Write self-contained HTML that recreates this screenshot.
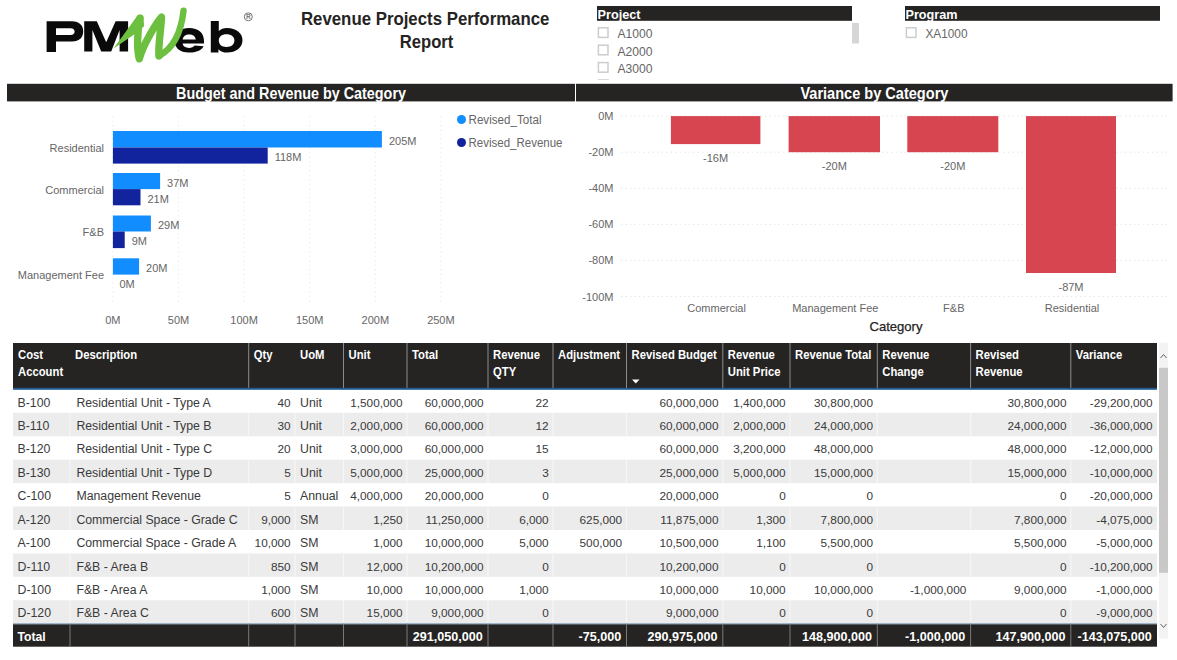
<!DOCTYPE html><html><head><meta charset="utf-8"><style>
html,body{margin:0;padding:0;background:#fff;}
body{width:1177px;height:660px;overflow:hidden;position:relative;font-family:"Liberation Sans", sans-serif;}
svg{position:absolute;left:0;top:0;}
</style></head><body>
<svg width="1177" height="660" viewBox="0 0 1177 660" font-family='"Liberation Sans", sans-serif'>

<g id="logo">
<path fill="#0a0a0a" fill-rule="evenodd" d="M46.6,21.2 H72 C79.5,21.2 83.2,25.5 83.2,31.3 C83.2,37.3 79.5,41.6 72,41.6 H56 V52 H46.6 Z M56,28.3 H70.5 C73.2,28.3 74.6,29.6 74.6,31.6 C74.6,33.6 73.2,35.1 70.5,35.1 H56 Z"/>
<path fill="#0a0a0a" d="M84.2,21.3 H96.8 L106.2,42.3 L115.6,21.3 H128.1 V51.6 H119.6 V30 L111.2,51.6 H101.2 L92.4,30 V51.6 H84.2 Z"/>
<path fill="#0a0a0a" fill-rule="evenodd" d="M204,43.6 H182.6 C183,46.5 185.5,48 189,48 C191.5,48 193.5,47.2 194.6,45.6 L203.6,46.2 C201.6,50.2 196.5,52.5 189,52.5 C179.5,52.5 174.4,47.5 174.4,40.2 C174.4,32.8 180,27.9 189,27.9 C198.5,27.9 204,32.8 204,41 Z M182.6,39.6 H195.8 C195.4,36.3 192.8,34.4 189.2,34.4 C185.6,34.4 183.1,36.3 182.6,39.6 Z"/>
<path fill="#0a0a0a" fill-rule="evenodd" d="M210.8,21.1 H218.8 V31 C220.8,29 223.5,28 227,28 C236,28 242.5,33 242.5,40.3 C242.5,47.6 236,52.6 227,52.6 C223.3,52.6 220.5,51.4 218.4,49.2 V52.4 H210.8 Z M226.5,34.3 C221.5,34.3 218.8,36.8 218.8,40.6 C218.8,44.4 221.5,47 226.5,47 C231.5,47 234.4,44.4 234.4,40.6 C234.4,36.8 231.5,34.3 226.5,34.3 Z"/>
<path fill="#6cbf3f" d="M113.6,48.4 L136.4,17 C138.2,14.4 141.5,14 143.2,16.4 L144.2,26 L137,32.5 L113.6,48.4 Z"/>
<path fill="none" stroke="#6cbf3f" stroke-width="7.4" stroke-linejoin="round" stroke-linecap="round" d="M140,18.2 C137.5,30 136.5,48 139.3,58.8 C143,45 155,25 161.5,17.2 C161,30 158,45 159,55.8"/>
<path fill="none" stroke="#6cbf3f" stroke-width="6.4" stroke-linecap="round" d="M159,55.8 C170,50 180.5,38 183.5,10.8"/>
<circle cx="248.3" cy="16.8" r="4" fill="none" stroke="#777" stroke-width="1"/>
<text x="248.4" y="19.4" font-size="6.5" font-weight="bold" text-anchor="middle" fill="#777">R</text>
</g>
<text x="425.2" y="24.8" font-size="17.8" font-weight="bold" fill="#252423" text-anchor="middle" textLength="248.5" lengthAdjust="spacingAndGlyphs">Revenue Projects Performance</text>
<text x="426.6" y="47.6" font-size="17.8" font-weight="bold" fill="#252423" text-anchor="middle" textLength="53.5" lengthAdjust="spacingAndGlyphs">Report</text>
<defs><clipPath id="pclip"><rect x="590" y="0" width="280" height="80"/></clipPath></defs>
<g clip-path="url(#pclip)">
<rect x="597" y="6" width="255" height="14.8" fill="#252423"/>
<text x="597.5" y="19" font-size="12.5" font-weight="bold" fill="#fff" textLength="43" lengthAdjust="spacingAndGlyphs">Project</text>
<rect x="598.4" y="27.8" width="9.6" height="9.6" fill="#fff" stroke="#cdcdcd" stroke-width="1.5"/>
<text x="617.5" y="38.2" font-size="12.3" fill="#666" textLength="35" lengthAdjust="spacingAndGlyphs">A1000</text>
<rect x="598.4" y="45.199999999999996" width="9.6" height="9.6" fill="#fff" stroke="#cdcdcd" stroke-width="1.5"/>
<text x="617.5" y="55.599999999999994" font-size="12.3" fill="#666" textLength="35" lengthAdjust="spacingAndGlyphs">A2000</text>
<rect x="598.4" y="62.6" width="9.6" height="9.6" fill="#fff" stroke="#cdcdcd" stroke-width="1.5"/>
<text x="617.5" y="73.0" font-size="12.3" fill="#666" textLength="35" lengthAdjust="spacingAndGlyphs">A3000</text>
<rect x="598.4" y="79.99999999999999" width="9.6" height="9.6" fill="#fff" stroke="#cdcdcd" stroke-width="1.5"/>
<text x="617.5" y="90.39999999999999" font-size="12.3" fill="#666" textLength="35" lengthAdjust="spacingAndGlyphs">A4000</text>
</g>
<rect x="852" y="23" width="7" height="20.5" fill="#d6d6d6"/>
<rect x="905" y="6" width="255" height="14.8" fill="#252423"/>
<text x="905.5" y="19" font-size="12.5" font-weight="bold" fill="#fff" textLength="52" lengthAdjust="spacingAndGlyphs">Program</text>
<rect x="906.4" y="27.8" width="9.6" height="9.6" fill="#fff" stroke="#cdcdcd" stroke-width="1.5"/>
<text x="925.5" y="38.2" font-size="12.3" fill="#666" textLength="42" lengthAdjust="spacingAndGlyphs">XA1000</text>
<rect x="7" y="83.8" width="568" height="17.6" fill="#252423"/>
<text x="291" y="99" font-size="16.5" font-weight="bold" fill="#fff" text-anchor="middle" textLength="230" lengthAdjust="spacingAndGlyphs">Budget and Revenue by Category</text>
<rect x="576" y="83.8" width="596.6" height="17.6" fill="#252423"/>
<text x="874.4" y="99" font-size="16.5" font-weight="bold" fill="#fff" text-anchor="middle" textLength="148" lengthAdjust="spacingAndGlyphs">Variance by Category</text>
<line x1="112.9" y1="116" x2="112.9" y2="302" stroke="#ececec" stroke-width="1" stroke-dasharray="1.5,3"/>
<text x="112.9" y="324" font-size="11" fill="#666" text-anchor="middle">0M</text>
<line x1="178.5" y1="116" x2="178.5" y2="302" stroke="#ececec" stroke-width="1" stroke-dasharray="1.5,3"/>
<text x="178.5" y="324" font-size="11" fill="#666" text-anchor="middle">50M</text>
<line x1="244.1" y1="116" x2="244.1" y2="302" stroke="#ececec" stroke-width="1" stroke-dasharray="1.5,3"/>
<text x="244.1" y="324" font-size="11" fill="#666" text-anchor="middle">100M</text>
<line x1="309.7" y1="116" x2="309.7" y2="302" stroke="#ececec" stroke-width="1" stroke-dasharray="1.5,3"/>
<text x="309.7" y="324" font-size="11" fill="#666" text-anchor="middle">150M</text>
<line x1="375.3" y1="116" x2="375.3" y2="302" stroke="#ececec" stroke-width="1" stroke-dasharray="1.5,3"/>
<text x="375.3" y="324" font-size="11" fill="#666" text-anchor="middle">200M</text>
<line x1="440.9" y1="116" x2="440.9" y2="302" stroke="#ececec" stroke-width="1" stroke-dasharray="1.5,3"/>
<text x="440.9" y="324" font-size="11" fill="#666" text-anchor="middle">250M</text>
<rect x="112.9" y="131" width="269.0" height="16.5" fill="#118dff"/>
<rect x="112.9" y="147.5" width="154.8" height="16.1" fill="#12239e"/>
<text x="104" y="152.1" font-size="11" fill="#666" text-anchor="end">Residential</text>
<text x="388.9" y="144.8" font-size="11" fill="#666">205M</text>
<text x="274.7" y="161.1" font-size="11" fill="#666">118M</text>
<rect x="112.9" y="173" width="47.2" height="16.1" fill="#118dff"/>
<rect x="112.9" y="189.1" width="27.6" height="16.2" fill="#12239e"/>
<text x="104" y="193.7" font-size="11" fill="#666" text-anchor="end">Commercial</text>
<text x="167.1" y="186.6" font-size="11" fill="#666">37M</text>
<text x="147.5" y="202.7" font-size="11" fill="#666">21M</text>
<rect x="112.9" y="215.5" width="38.0" height="16.0" fill="#118dff"/>
<rect x="112.9" y="231.5" width="11.8" height="16.6" fill="#12239e"/>
<text x="104" y="236.1" font-size="11" fill="#666" text-anchor="end">F&amp;B</text>
<text x="157.9" y="229.0" font-size="11" fill="#666">29M</text>
<text x="131.7" y="245.3" font-size="11" fill="#666">9M</text>
<rect x="112.9" y="258.3" width="26.2" height="16.3" fill="#118dff"/>
<text x="104" y="279.2" font-size="11" fill="#666" text-anchor="end">Management Fee</text>
<text x="146.1" y="272.0" font-size="11" fill="#666">20M</text>
<text x="119.5" y="288.2" font-size="11" fill="#666">0M</text>
<circle cx="461.5" cy="119.5" r="4.5" fill="#118dff"/>
<text x="468.5" y="123.8" font-size="12" fill="#666" textLength="73" lengthAdjust="spacingAndGlyphs">Revised_Total</text>
<circle cx="461.5" cy="142.5" r="4.5" fill="#12239e"/>
<text x="468.5" y="146.8" font-size="12" fill="#666" textLength="94" lengthAdjust="spacingAndGlyphs">Revised_Revenue</text>
<line x1="621" y1="116.1" x2="1169" y2="116.1" stroke="#e6e6e6" stroke-width="1" stroke-dasharray="1.5,3"/>
<text x="613.5" y="120.1" font-size="11" fill="#666" text-anchor="end">0M</text>
<line x1="621" y1="152.2" x2="1169" y2="152.2" stroke="#e6e6e6" stroke-width="1" stroke-dasharray="1.5,3"/>
<text x="613.5" y="156.2" font-size="11" fill="#666" text-anchor="end">-20M</text>
<line x1="621" y1="188.3" x2="1169" y2="188.3" stroke="#e6e6e6" stroke-width="1" stroke-dasharray="1.5,3"/>
<text x="613.5" y="192.3" font-size="11" fill="#666" text-anchor="end">-40M</text>
<line x1="621" y1="224.3" x2="1169" y2="224.3" stroke="#e6e6e6" stroke-width="1" stroke-dasharray="1.5,3"/>
<text x="613.5" y="228.3" font-size="11" fill="#666" text-anchor="end">-60M</text>
<line x1="621" y1="260.4" x2="1169" y2="260.4" stroke="#e6e6e6" stroke-width="1" stroke-dasharray="1.5,3"/>
<text x="613.5" y="264.4" font-size="11" fill="#666" text-anchor="end">-80M</text>
<line x1="621" y1="296.5" x2="1169" y2="296.5" stroke="#e6e6e6" stroke-width="1" stroke-dasharray="1.5,3"/>
<text x="613.5" y="300.5" font-size="11" fill="#666" text-anchor="end">-100M</text>
<rect x="670.9" y="116.1" width="89.5" height="28.0" fill="#d64550"/>
<text x="715.6" y="162.1" font-size="11" fill="#666" text-anchor="middle">-16M</text>
<text x="716.6" y="312" font-size="11" fill="#666" text-anchor="middle">Commercial</text>
<rect x="788.6" y="116.1" width="91.4" height="36.1" fill="#d64550"/>
<text x="834.3" y="170.2" font-size="11" fill="#666" text-anchor="middle">-20M</text>
<text x="835.3" y="312" font-size="11" fill="#666" text-anchor="middle">Management Fee</text>
<rect x="907.3" y="116.1" width="91.0" height="36.1" fill="#d64550"/>
<text x="952.8" y="170.2" font-size="11" fill="#666" text-anchor="middle">-20M</text>
<text x="953.8" y="312" font-size="11" fill="#666" text-anchor="middle">F&amp;B</text>
<rect x="1026" y="116.1" width="90.0" height="156.9" fill="#d64550"/>
<text x="1071.0" y="291.0" font-size="11" fill="#666" text-anchor="middle">-87M</text>
<text x="1072.0" y="312" font-size="11" fill="#666" text-anchor="middle">Residential</text>
<text x="896" y="330.5" font-size="13" fill="#252423" text-anchor="middle" textLength="53" lengthAdjust="spacingAndGlyphs" stroke="#252423" stroke-width="0.25">Category</text>
<rect x="13" y="343" width="1144" height="45.60000000000002" fill="#252423"/>
<rect x="248.2" y="343" width="1" height="45.60000000000002" fill="#8c8c8c"/>
<rect x="343.0" y="343" width="1" height="45.60000000000002" fill="#8c8c8c"/>
<rect x="406.5" y="343" width="1" height="45.60000000000002" fill="#8c8c8c"/>
<rect x="487.5" y="343" width="1" height="45.60000000000002" fill="#8c8c8c"/>
<rect x="552.5" y="343" width="1" height="45.60000000000002" fill="#8c8c8c"/>
<rect x="626.0" y="343" width="1" height="45.60000000000002" fill="#8c8c8c"/>
<rect x="722.3" y="343" width="1" height="45.60000000000002" fill="#8c8c8c"/>
<rect x="789.5" y="343" width="1" height="45.60000000000002" fill="#8c8c8c"/>
<rect x="876.8" y="343" width="1" height="45.60000000000002" fill="#8c8c8c"/>
<rect x="970.1" y="343" width="1" height="45.60000000000002" fill="#8c8c8c"/>
<rect x="1070.3" y="343" width="1" height="45.60000000000002" fill="#8c8c8c"/>
<rect x="13" y="387.8" width="1144" height="2" fill="#245b8f"/>
<text transform="matrix(0.876,0,0,1,18.0,358.6)" font-size="12.9" font-weight="bold" fill="#fff">Cost</text>
<text transform="matrix(0.876,0,0,1,18.0,375.6)" font-size="12.9" font-weight="bold" fill="#fff">Account</text>
<text transform="matrix(0.876,0,0,1,75.0,358.6)" font-size="12.9" font-weight="bold" fill="#fff">Description</text>
<text transform="matrix(0.876,0,0,1,253.7,358.6)" font-size="12.9" font-weight="bold" fill="#fff">Qty</text>
<text transform="matrix(0.876,0,0,1,300.0,358.6)" font-size="12.9" font-weight="bold" fill="#fff">UoM</text>
<text transform="matrix(0.876,0,0,1,348.5,358.6)" font-size="12.9" font-weight="bold" fill="#fff">Unit</text>
<text transform="matrix(0.876,0,0,1,412.0,358.6)" font-size="12.9" font-weight="bold" fill="#fff">Total</text>
<text transform="matrix(0.876,0,0,1,493.0,358.6)" font-size="12.9" font-weight="bold" fill="#fff">Revenue</text>
<text transform="matrix(0.876,0,0,1,493.0,375.6)" font-size="12.9" font-weight="bold" fill="#fff">QTY</text>
<text transform="matrix(0.876,0,0,1,558.0,358.6)" font-size="12.9" font-weight="bold" fill="#fff">Adjustment</text>
<text transform="matrix(0.876,0,0,1,631.5,358.6)" font-size="12.9" font-weight="bold" fill="#fff">Revised Budget</text>
<text transform="matrix(0.876,0,0,1,727.8,358.6)" font-size="12.9" font-weight="bold" fill="#fff">Revenue</text>
<text transform="matrix(0.876,0,0,1,727.8,375.6)" font-size="12.9" font-weight="bold" fill="#fff">Unit Price</text>
<text transform="matrix(0.876,0,0,1,795.0,358.6)" font-size="12.9" font-weight="bold" fill="#fff">Revenue Total</text>
<text transform="matrix(0.876,0,0,1,882.3,358.6)" font-size="12.9" font-weight="bold" fill="#fff">Revenue</text>
<text transform="matrix(0.876,0,0,1,882.3,375.6)" font-size="12.9" font-weight="bold" fill="#fff">Change</text>
<text transform="matrix(0.876,0,0,1,975.6,358.6)" font-size="12.9" font-weight="bold" fill="#fff">Revised</text>
<text transform="matrix(0.876,0,0,1,975.6,375.6)" font-size="12.9" font-weight="bold" fill="#fff">Revenue</text>
<text transform="matrix(0.876,0,0,1,1075.8,358.6)" font-size="12.9" font-weight="bold" fill="#fff">Variance</text>
<path d="M632,379.6 L639.5,379.6 L635.75,383.6 Z" fill="#fff"/>
<text x="17.5" y="406.5" font-size="12.3" fill="#3a3a3a">B-100</text>
<text x="76.4" y="406.5" font-size="12.3" fill="#3a3a3a">Residential Unit - Type A</text>
<text x="290.7" y="406.5" font-size="11.8" fill="#3a3a3a" text-anchor="end">40</text>
<text x="300.0" y="406.5" font-size="12.3" fill="#3a3a3a">Unit</text>
<text x="402.7" y="406.5" font-size="11.8" fill="#3a3a3a" text-anchor="end">1,500,000</text>
<text x="483.7" y="406.5" font-size="11.8" fill="#3a3a3a" text-anchor="end">60,000,000</text>
<text x="548.7" y="406.5" font-size="11.8" fill="#3a3a3a" text-anchor="end">22</text>
<text x="718.5" y="406.5" font-size="11.8" fill="#3a3a3a" text-anchor="end">60,000,000</text>
<text x="785.7" y="406.5" font-size="11.8" fill="#3a3a3a" text-anchor="end">1,400,000</text>
<text x="873.0" y="406.5" font-size="11.8" fill="#3a3a3a" text-anchor="end">30,800,000</text>
<text x="1066.5" y="406.5" font-size="11.8" fill="#3a3a3a" text-anchor="end">30,800,000</text>
<text x="1152.7" y="406.5" font-size="11.8" fill="#3a3a3a" text-anchor="end">-29,200,000</text>
<rect x="13" y="412.83" width="1144" height="23.43" fill="#ececec"/>
<rect x="69.5" y="412.83" width="1" height="23.43" fill="#f7f7f7"/>
<rect x="248.2" y="412.83" width="1" height="23.43" fill="#f7f7f7"/>
<rect x="294.5" y="412.83" width="1" height="23.43" fill="#f7f7f7"/>
<rect x="343.0" y="412.83" width="1" height="23.43" fill="#f7f7f7"/>
<rect x="406.5" y="412.83" width="1" height="23.43" fill="#f7f7f7"/>
<rect x="487.5" y="412.83" width="1" height="23.43" fill="#f7f7f7"/>
<rect x="552.5" y="412.83" width="1" height="23.43" fill="#f7f7f7"/>
<rect x="626.0" y="412.83" width="1" height="23.43" fill="#f7f7f7"/>
<rect x="722.3" y="412.83" width="1" height="23.43" fill="#f7f7f7"/>
<rect x="789.5" y="412.83" width="1" height="23.43" fill="#f7f7f7"/>
<rect x="876.8" y="412.83" width="1" height="23.43" fill="#f7f7f7"/>
<rect x="970.1" y="412.83" width="1" height="23.43" fill="#f7f7f7"/>
<rect x="1070.3" y="412.83" width="1" height="23.43" fill="#f7f7f7"/>
<text x="17.5" y="429.9" font-size="12.3" fill="#3a3a3a">B-110</text>
<text x="76.4" y="429.9" font-size="12.3" fill="#3a3a3a">Residential Unit - Type B</text>
<text x="290.7" y="429.9" font-size="11.8" fill="#3a3a3a" text-anchor="end">30</text>
<text x="300.0" y="429.9" font-size="12.3" fill="#3a3a3a">Unit</text>
<text x="402.7" y="429.9" font-size="11.8" fill="#3a3a3a" text-anchor="end">2,000,000</text>
<text x="483.7" y="429.9" font-size="11.8" fill="#3a3a3a" text-anchor="end">60,000,000</text>
<text x="548.7" y="429.9" font-size="11.8" fill="#3a3a3a" text-anchor="end">12</text>
<text x="718.5" y="429.9" font-size="11.8" fill="#3a3a3a" text-anchor="end">60,000,000</text>
<text x="785.7" y="429.9" font-size="11.8" fill="#3a3a3a" text-anchor="end">2,000,000</text>
<text x="873.0" y="429.9" font-size="11.8" fill="#3a3a3a" text-anchor="end">24,000,000</text>
<text x="1066.5" y="429.9" font-size="11.8" fill="#3a3a3a" text-anchor="end">24,000,000</text>
<text x="1152.7" y="429.9" font-size="11.8" fill="#3a3a3a" text-anchor="end">-36,000,000</text>
<text x="17.5" y="453.4" font-size="12.3" fill="#3a3a3a">B-120</text>
<text x="76.4" y="453.4" font-size="12.3" fill="#3a3a3a">Residential Unit - Type C</text>
<text x="290.7" y="453.4" font-size="11.8" fill="#3a3a3a" text-anchor="end">20</text>
<text x="300.0" y="453.4" font-size="12.3" fill="#3a3a3a">Unit</text>
<text x="402.7" y="453.4" font-size="11.8" fill="#3a3a3a" text-anchor="end">3,000,000</text>
<text x="483.7" y="453.4" font-size="11.8" fill="#3a3a3a" text-anchor="end">60,000,000</text>
<text x="548.7" y="453.4" font-size="11.8" fill="#3a3a3a" text-anchor="end">15</text>
<text x="718.5" y="453.4" font-size="11.8" fill="#3a3a3a" text-anchor="end">60,000,000</text>
<text x="785.7" y="453.4" font-size="11.8" fill="#3a3a3a" text-anchor="end">3,200,000</text>
<text x="873.0" y="453.4" font-size="11.8" fill="#3a3a3a" text-anchor="end">48,000,000</text>
<text x="1066.5" y="453.4" font-size="11.8" fill="#3a3a3a" text-anchor="end">48,000,000</text>
<text x="1152.7" y="453.4" font-size="11.8" fill="#3a3a3a" text-anchor="end">-12,000,000</text>
<rect x="13" y="459.69" width="1144" height="23.43" fill="#ececec"/>
<rect x="69.5" y="459.69" width="1" height="23.43" fill="#f7f7f7"/>
<rect x="248.2" y="459.69" width="1" height="23.43" fill="#f7f7f7"/>
<rect x="294.5" y="459.69" width="1" height="23.43" fill="#f7f7f7"/>
<rect x="343.0" y="459.69" width="1" height="23.43" fill="#f7f7f7"/>
<rect x="406.5" y="459.69" width="1" height="23.43" fill="#f7f7f7"/>
<rect x="487.5" y="459.69" width="1" height="23.43" fill="#f7f7f7"/>
<rect x="552.5" y="459.69" width="1" height="23.43" fill="#f7f7f7"/>
<rect x="626.0" y="459.69" width="1" height="23.43" fill="#f7f7f7"/>
<rect x="722.3" y="459.69" width="1" height="23.43" fill="#f7f7f7"/>
<rect x="789.5" y="459.69" width="1" height="23.43" fill="#f7f7f7"/>
<rect x="876.8" y="459.69" width="1" height="23.43" fill="#f7f7f7"/>
<rect x="970.1" y="459.69" width="1" height="23.43" fill="#f7f7f7"/>
<rect x="1070.3" y="459.69" width="1" height="23.43" fill="#f7f7f7"/>
<text x="17.5" y="476.8" font-size="12.3" fill="#3a3a3a">B-130</text>
<text x="76.4" y="476.8" font-size="12.3" fill="#3a3a3a">Residential Unit - Type D</text>
<text x="290.7" y="476.8" font-size="11.8" fill="#3a3a3a" text-anchor="end">5</text>
<text x="300.0" y="476.8" font-size="12.3" fill="#3a3a3a">Unit</text>
<text x="402.7" y="476.8" font-size="11.8" fill="#3a3a3a" text-anchor="end">5,000,000</text>
<text x="483.7" y="476.8" font-size="11.8" fill="#3a3a3a" text-anchor="end">25,000,000</text>
<text x="548.7" y="476.8" font-size="11.8" fill="#3a3a3a" text-anchor="end">3</text>
<text x="718.5" y="476.8" font-size="11.8" fill="#3a3a3a" text-anchor="end">25,000,000</text>
<text x="785.7" y="476.8" font-size="11.8" fill="#3a3a3a" text-anchor="end">5,000,000</text>
<text x="873.0" y="476.8" font-size="11.8" fill="#3a3a3a" text-anchor="end">15,000,000</text>
<text x="1066.5" y="476.8" font-size="11.8" fill="#3a3a3a" text-anchor="end">15,000,000</text>
<text x="1152.7" y="476.8" font-size="11.8" fill="#3a3a3a" text-anchor="end">-10,000,000</text>
<text x="17.5" y="500.2" font-size="12.3" fill="#3a3a3a">C-100</text>
<text x="76.4" y="500.2" font-size="12.3" fill="#3a3a3a">Management Revenue</text>
<text x="290.7" y="500.2" font-size="11.8" fill="#3a3a3a" text-anchor="end">5</text>
<text x="300.0" y="500.2" font-size="12.3" fill="#3a3a3a">Annual</text>
<text x="402.7" y="500.2" font-size="11.8" fill="#3a3a3a" text-anchor="end">4,000,000</text>
<text x="483.7" y="500.2" font-size="11.8" fill="#3a3a3a" text-anchor="end">20,000,000</text>
<text x="548.7" y="500.2" font-size="11.8" fill="#3a3a3a" text-anchor="end">0</text>
<text x="718.5" y="500.2" font-size="11.8" fill="#3a3a3a" text-anchor="end">20,000,000</text>
<text x="785.7" y="500.2" font-size="11.8" fill="#3a3a3a" text-anchor="end">0</text>
<text x="873.0" y="500.2" font-size="11.8" fill="#3a3a3a" text-anchor="end">0</text>
<text x="1066.5" y="500.2" font-size="11.8" fill="#3a3a3a" text-anchor="end">0</text>
<text x="1152.7" y="500.2" font-size="11.8" fill="#3a3a3a" text-anchor="end">-20,000,000</text>
<rect x="13" y="506.55" width="1144" height="23.43" fill="#ececec"/>
<rect x="69.5" y="506.55" width="1" height="23.43" fill="#f7f7f7"/>
<rect x="248.2" y="506.55" width="1" height="23.43" fill="#f7f7f7"/>
<rect x="294.5" y="506.55" width="1" height="23.43" fill="#f7f7f7"/>
<rect x="343.0" y="506.55" width="1" height="23.43" fill="#f7f7f7"/>
<rect x="406.5" y="506.55" width="1" height="23.43" fill="#f7f7f7"/>
<rect x="487.5" y="506.55" width="1" height="23.43" fill="#f7f7f7"/>
<rect x="552.5" y="506.55" width="1" height="23.43" fill="#f7f7f7"/>
<rect x="626.0" y="506.55" width="1" height="23.43" fill="#f7f7f7"/>
<rect x="722.3" y="506.55" width="1" height="23.43" fill="#f7f7f7"/>
<rect x="789.5" y="506.55" width="1" height="23.43" fill="#f7f7f7"/>
<rect x="876.8" y="506.55" width="1" height="23.43" fill="#f7f7f7"/>
<rect x="970.1" y="506.55" width="1" height="23.43" fill="#f7f7f7"/>
<rect x="1070.3" y="506.55" width="1" height="23.43" fill="#f7f7f7"/>
<text x="17.5" y="523.6" font-size="12.3" fill="#3a3a3a">A-120</text>
<text x="76.4" y="523.6" font-size="12.3" fill="#3a3a3a">Commercial Space - Grade C</text>
<text x="290.7" y="523.6" font-size="11.8" fill="#3a3a3a" text-anchor="end">9,000</text>
<text x="300.0" y="523.6" font-size="12.3" fill="#3a3a3a">SM</text>
<text x="402.7" y="523.6" font-size="11.8" fill="#3a3a3a" text-anchor="end">1,250</text>
<text x="483.7" y="523.6" font-size="11.8" fill="#3a3a3a" text-anchor="end">11,250,000</text>
<text x="548.7" y="523.6" font-size="11.8" fill="#3a3a3a" text-anchor="end">6,000</text>
<text x="622.2" y="523.6" font-size="11.8" fill="#3a3a3a" text-anchor="end">625,000</text>
<text x="718.5" y="523.6" font-size="11.8" fill="#3a3a3a" text-anchor="end">11,875,000</text>
<text x="785.7" y="523.6" font-size="11.8" fill="#3a3a3a" text-anchor="end">1,300</text>
<text x="873.0" y="523.6" font-size="11.8" fill="#3a3a3a" text-anchor="end">7,800,000</text>
<text x="1066.5" y="523.6" font-size="11.8" fill="#3a3a3a" text-anchor="end">7,800,000</text>
<text x="1152.7" y="523.6" font-size="11.8" fill="#3a3a3a" text-anchor="end">-4,075,000</text>
<text x="17.5" y="547.1" font-size="12.3" fill="#3a3a3a">A-100</text>
<text x="76.4" y="547.1" font-size="12.3" fill="#3a3a3a">Commercial Space - Grade A</text>
<text x="290.7" y="547.1" font-size="11.8" fill="#3a3a3a" text-anchor="end">10,000</text>
<text x="300.0" y="547.1" font-size="12.3" fill="#3a3a3a">SM</text>
<text x="402.7" y="547.1" font-size="11.8" fill="#3a3a3a" text-anchor="end">1,000</text>
<text x="483.7" y="547.1" font-size="11.8" fill="#3a3a3a" text-anchor="end">10,000,000</text>
<text x="548.7" y="547.1" font-size="11.8" fill="#3a3a3a" text-anchor="end">5,000</text>
<text x="622.2" y="547.1" font-size="11.8" fill="#3a3a3a" text-anchor="end">500,000</text>
<text x="718.5" y="547.1" font-size="11.8" fill="#3a3a3a" text-anchor="end">10,500,000</text>
<text x="785.7" y="547.1" font-size="11.8" fill="#3a3a3a" text-anchor="end">1,100</text>
<text x="873.0" y="547.1" font-size="11.8" fill="#3a3a3a" text-anchor="end">5,500,000</text>
<text x="1066.5" y="547.1" font-size="11.8" fill="#3a3a3a" text-anchor="end">5,500,000</text>
<text x="1152.7" y="547.1" font-size="11.8" fill="#3a3a3a" text-anchor="end">-5,000,000</text>
<rect x="13" y="553.41" width="1144" height="23.43" fill="#ececec"/>
<rect x="69.5" y="553.41" width="1" height="23.43" fill="#f7f7f7"/>
<rect x="248.2" y="553.41" width="1" height="23.43" fill="#f7f7f7"/>
<rect x="294.5" y="553.41" width="1" height="23.43" fill="#f7f7f7"/>
<rect x="343.0" y="553.41" width="1" height="23.43" fill="#f7f7f7"/>
<rect x="406.5" y="553.41" width="1" height="23.43" fill="#f7f7f7"/>
<rect x="487.5" y="553.41" width="1" height="23.43" fill="#f7f7f7"/>
<rect x="552.5" y="553.41" width="1" height="23.43" fill="#f7f7f7"/>
<rect x="626.0" y="553.41" width="1" height="23.43" fill="#f7f7f7"/>
<rect x="722.3" y="553.41" width="1" height="23.43" fill="#f7f7f7"/>
<rect x="789.5" y="553.41" width="1" height="23.43" fill="#f7f7f7"/>
<rect x="876.8" y="553.41" width="1" height="23.43" fill="#f7f7f7"/>
<rect x="970.1" y="553.41" width="1" height="23.43" fill="#f7f7f7"/>
<rect x="1070.3" y="553.41" width="1" height="23.43" fill="#f7f7f7"/>
<text x="17.5" y="570.5" font-size="12.3" fill="#3a3a3a">D-110</text>
<text x="76.4" y="570.5" font-size="12.3" fill="#3a3a3a">F&amp;B - Area B</text>
<text x="290.7" y="570.5" font-size="11.8" fill="#3a3a3a" text-anchor="end">850</text>
<text x="300.0" y="570.5" font-size="12.3" fill="#3a3a3a">SM</text>
<text x="402.7" y="570.5" font-size="11.8" fill="#3a3a3a" text-anchor="end">12,000</text>
<text x="483.7" y="570.5" font-size="11.8" fill="#3a3a3a" text-anchor="end">10,200,000</text>
<text x="548.7" y="570.5" font-size="11.8" fill="#3a3a3a" text-anchor="end">0</text>
<text x="718.5" y="570.5" font-size="11.8" fill="#3a3a3a" text-anchor="end">10,200,000</text>
<text x="785.7" y="570.5" font-size="11.8" fill="#3a3a3a" text-anchor="end">0</text>
<text x="873.0" y="570.5" font-size="11.8" fill="#3a3a3a" text-anchor="end">0</text>
<text x="1066.5" y="570.5" font-size="11.8" fill="#3a3a3a" text-anchor="end">0</text>
<text x="1152.7" y="570.5" font-size="11.8" fill="#3a3a3a" text-anchor="end">-10,200,000</text>
<text x="17.5" y="593.9" font-size="12.3" fill="#3a3a3a">D-100</text>
<text x="76.4" y="593.9" font-size="12.3" fill="#3a3a3a">F&amp;B - Area A</text>
<text x="290.7" y="593.9" font-size="11.8" fill="#3a3a3a" text-anchor="end">1,000</text>
<text x="300.0" y="593.9" font-size="12.3" fill="#3a3a3a">SM</text>
<text x="402.7" y="593.9" font-size="11.8" fill="#3a3a3a" text-anchor="end">10,000</text>
<text x="483.7" y="593.9" font-size="11.8" fill="#3a3a3a" text-anchor="end">10,000,000</text>
<text x="548.7" y="593.9" font-size="11.8" fill="#3a3a3a" text-anchor="end">1,000</text>
<text x="718.5" y="593.9" font-size="11.8" fill="#3a3a3a" text-anchor="end">10,000,000</text>
<text x="785.7" y="593.9" font-size="11.8" fill="#3a3a3a" text-anchor="end">10,000</text>
<text x="873.0" y="593.9" font-size="11.8" fill="#3a3a3a" text-anchor="end">10,000,000</text>
<text x="966.3000000000001" y="593.9" font-size="11.8" fill="#3a3a3a" text-anchor="end">-1,000,000</text>
<text x="1066.5" y="593.9" font-size="11.8" fill="#3a3a3a" text-anchor="end">9,000,000</text>
<text x="1152.7" y="593.9" font-size="11.8" fill="#3a3a3a" text-anchor="end">-1,000,000</text>
<rect x="13" y="600.27" width="1144" height="23.43" fill="#ececec"/>
<rect x="69.5" y="600.27" width="1" height="23.43" fill="#f7f7f7"/>
<rect x="248.2" y="600.27" width="1" height="23.43" fill="#f7f7f7"/>
<rect x="294.5" y="600.27" width="1" height="23.43" fill="#f7f7f7"/>
<rect x="343.0" y="600.27" width="1" height="23.43" fill="#f7f7f7"/>
<rect x="406.5" y="600.27" width="1" height="23.43" fill="#f7f7f7"/>
<rect x="487.5" y="600.27" width="1" height="23.43" fill="#f7f7f7"/>
<rect x="552.5" y="600.27" width="1" height="23.43" fill="#f7f7f7"/>
<rect x="626.0" y="600.27" width="1" height="23.43" fill="#f7f7f7"/>
<rect x="722.3" y="600.27" width="1" height="23.43" fill="#f7f7f7"/>
<rect x="789.5" y="600.27" width="1" height="23.43" fill="#f7f7f7"/>
<rect x="876.8" y="600.27" width="1" height="23.43" fill="#f7f7f7"/>
<rect x="970.1" y="600.27" width="1" height="23.43" fill="#f7f7f7"/>
<rect x="1070.3" y="600.27" width="1" height="23.43" fill="#f7f7f7"/>
<text x="17.5" y="617.4" font-size="12.3" fill="#3a3a3a">D-120</text>
<text x="76.4" y="617.4" font-size="12.3" fill="#3a3a3a">F&amp;B - Area C</text>
<text x="290.7" y="617.4" font-size="11.8" fill="#3a3a3a" text-anchor="end">600</text>
<text x="300.0" y="617.4" font-size="12.3" fill="#3a3a3a">SM</text>
<text x="402.7" y="617.4" font-size="11.8" fill="#3a3a3a" text-anchor="end">15,000</text>
<text x="483.7" y="617.4" font-size="11.8" fill="#3a3a3a" text-anchor="end">9,000,000</text>
<text x="548.7" y="617.4" font-size="11.8" fill="#3a3a3a" text-anchor="end">0</text>
<text x="718.5" y="617.4" font-size="11.8" fill="#3a3a3a" text-anchor="end">9,000,000</text>
<text x="785.7" y="617.4" font-size="11.8" fill="#3a3a3a" text-anchor="end">0</text>
<text x="873.0" y="617.4" font-size="11.8" fill="#3a3a3a" text-anchor="end">0</text>
<text x="1066.5" y="617.4" font-size="11.8" fill="#3a3a3a" text-anchor="end">0</text>
<text x="1152.7" y="617.4" font-size="11.8" fill="#3a3a3a" text-anchor="end">-9,000,000</text>
<rect x="13" y="623.7" width="1144" height="23.0" fill="#252423"/>
<rect x="13" y="623.2" width="1144" height="1.2" fill="#9fb6cc"/>
<rect x="69.5" y="623.7" width="1" height="23.0" fill="#7a7a7a"/>
<rect x="248.2" y="623.7" width="1" height="23.0" fill="#7a7a7a"/>
<rect x="294.5" y="623.7" width="1" height="23.0" fill="#7a7a7a"/>
<rect x="343.0" y="623.7" width="1" height="23.0" fill="#7a7a7a"/>
<rect x="406.5" y="623.7" width="1" height="23.0" fill="#7a7a7a"/>
<rect x="487.5" y="623.7" width="1" height="23.0" fill="#7a7a7a"/>
<rect x="552.5" y="623.7" width="1" height="23.0" fill="#7a7a7a"/>
<rect x="626.0" y="623.7" width="1" height="23.0" fill="#7a7a7a"/>
<rect x="722.3" y="623.7" width="1" height="23.0" fill="#7a7a7a"/>
<rect x="789.5" y="623.7" width="1" height="23.0" fill="#7a7a7a"/>
<rect x="876.8" y="623.7" width="1" height="23.0" fill="#7a7a7a"/>
<rect x="970.1" y="623.7" width="1" height="23.0" fill="#7a7a7a"/>
<rect x="1070.3" y="623.7" width="1" height="23.0" fill="#7a7a7a"/>
<text x="17.5" y="640.8" font-size="12.2" font-weight="bold" fill="#fff">Total</text>
<text x="482.7" y="640.8" font-size="12.6" font-weight="bold" fill="#fff" text-anchor="end">291,050,000</text>
<text x="621.2" y="640.8" font-size="12.6" font-weight="bold" fill="#fff" text-anchor="end">-75,000</text>
<text x="717.5" y="640.8" font-size="12.6" font-weight="bold" fill="#fff" text-anchor="end">290,975,000</text>
<text x="872.0" y="640.8" font-size="12.6" font-weight="bold" fill="#fff" text-anchor="end">148,900,000</text>
<text x="965.3000000000001" y="640.8" font-size="12.6" font-weight="bold" fill="#fff" text-anchor="end">-1,000,000</text>
<text x="1065.5" y="640.8" font-size="12.6" font-weight="bold" fill="#fff" text-anchor="end">147,900,000</text>
<text x="1151.7" y="640.8" font-size="12.6" font-weight="bold" fill="#fff" text-anchor="end">-143,075,000</text>
<rect x="1159" y="342.7" width="9" height="296" fill="#f3f3f3"/>
<rect x="1159" y="367.8" width="9" height="205" fill="#c8c8c8"/>
<path d="M1160.5,358 L1163.5,354.5 L1166.5,358" fill="none" stroke="#666" stroke-width="1"/>
<path d="M1160.5,624 L1163.5,627.5 L1166.5,624" fill="none" stroke="#666" stroke-width="1"/>
</svg></body></html>
